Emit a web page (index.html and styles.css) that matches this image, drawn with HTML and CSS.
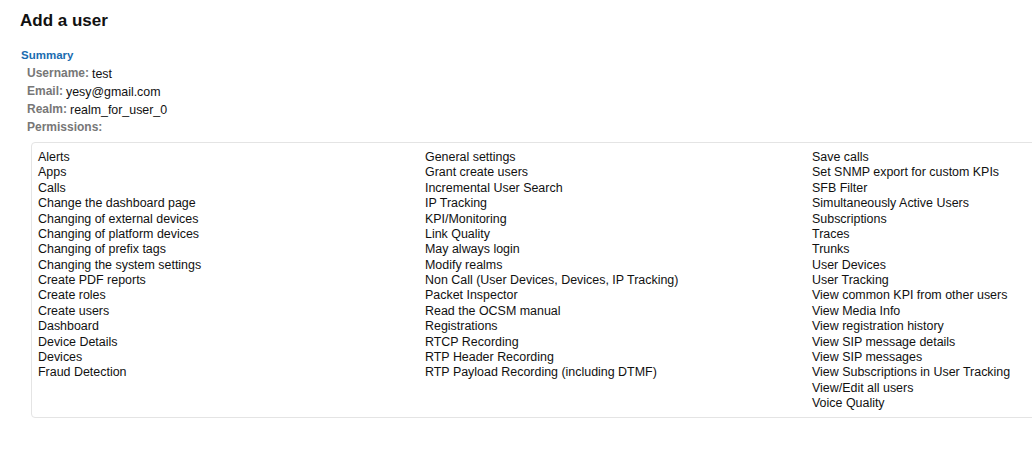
FILE: index.html
```html
<!DOCTYPE html>
<html>
<head>
<meta charset="utf-8">
<link rel="stylesheet" href="styles.css">
</head>
<body>
<div class="page">
  <h1 class="title">Add a user</h1>
  <h2 class="section">Summary</h2>
  <div class="summary">
    <div class="row"><span class="label">Username:</span><span class="value">test</span></div>
    <div class="row"><span class="label">Email:</span><span class="value">yesy@gmail.com</span></div>
    <div class="row"><span class="label">Realm:</span><span class="value">realm_for_user_0</span></div>
    <div class="row"><span class="label">Permissions:</span></div>
  </div>
  <div class="perms">
    <ul class="col">
      <li>Alerts</li>
      <li>Apps</li>
      <li>Calls</li>
      <li>Change the dashboard page</li>
      <li>Changing of external devices</li>
      <li>Changing of platform devices</li>
      <li>Changing of prefix tags</li>
      <li>Changing the system settings</li>
      <li>Create PDF reports</li>
      <li>Create roles</li>
      <li>Create users</li>
      <li>Dashboard</li>
      <li>Device Details</li>
      <li>Devices</li>
      <li>Fraud Detection</li>
    </ul>
    <ul class="col">
      <li>General settings</li>
      <li>Grant create users</li>
      <li>Incremental User Search</li>
      <li>IP Tracking</li>
      <li>KPI/Monitoring</li>
      <li>Link Quality</li>
      <li>May always login</li>
      <li>Modify realms</li>
      <li>Non Call (User Devices, Devices, IP Tracking)</li>
      <li>Packet Inspector</li>
      <li>Read the OCSM manual</li>
      <li>Registrations</li>
      <li>RTCP Recording</li>
      <li>RTP Header Recording</li>
      <li>RTP Payload Recording (including DTMF)</li>
    </ul>
    <ul class="col">
      <li>Save calls</li>
      <li>Set SNMP export for custom KPIs</li>
      <li>SFB Filter</li>
      <li>Simultaneously Active Users</li>
      <li>Subscriptions</li>
      <li>Traces</li>
      <li>Trunks</li>
      <li>User Devices</li>
      <li>User Tracking</li>
      <li>View common KPI from other users</li>
      <li>View Media Info</li>
      <li>View registration history</li>
      <li>View SIP message details</li>
      <li>View SIP messages</li>
      <li>View Subscriptions in User Tracking</li>
      <li>View/Edit all users</li>
      <li>Voice Quality</li>
    </ul>
  </div>
</div>
</body>
</html>
```
FILE: styles.css
```css
html, body {
  margin: 0;
  padding: 0;
  background: #ffffff;
  overflow: hidden;
}
body {
  font-family: "Liberation Sans", Arial, sans-serif;
  color: #000;
}
.page {
  width: 1012px;
  height: 449px;
  padding: 11px 0 0 20px;
  overflow: hidden;
}
.title {
  margin: 0;
  font-size: 17px;
  line-height: 20px;
  font-weight: bold;
  color: #111;
}
.section {
  margin: 17px 0 0 1px;
  font-size: 11.5px;
  line-height: 14px;
  font-weight: bold;
  color: #1a6cb0;
}
.summary {
  margin: 2px 0 0 7px;
}
.row {
  height: 18px;
  display: flex;
  align-items: baseline;
  gap: 3px;
}
.label {
  font-size: 12px;
  font-weight: bold;
  color: #777;
  line-height: 18px;
}
.value {
  font-size: 12.4px;
  line-height: 18px;
  position: relative;
  top: 1px;
  color: #111;
}
.perms {
  margin: 6px 0 0 11px;
  width: 1200px;
  border: 1px solid #e4e4e4;
  border-radius: 4px;
  padding: 7px 0 6px 6px;
  display: grid;
  grid-template-columns: 387px 387px 387px;
}
.col {
  list-style: none;
  margin: 0;
  padding: 0;
  font-size: 12.45px;
  line-height: 15.375px;
  color: #111;
}
```
